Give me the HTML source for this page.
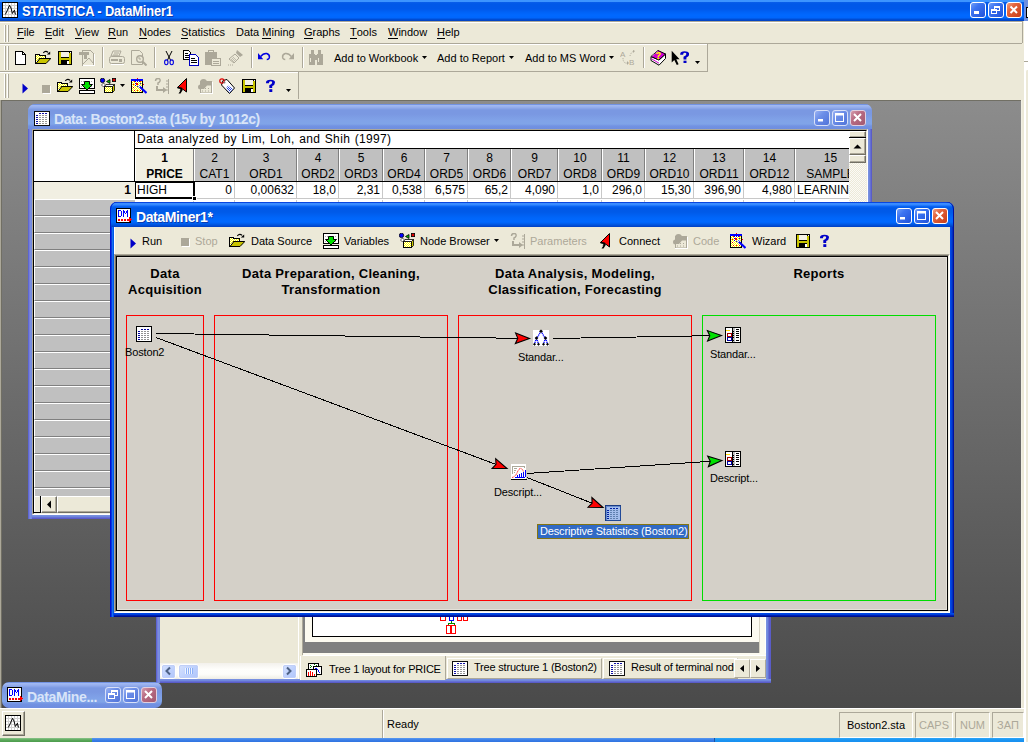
<!DOCTYPE html>
<html><head><meta charset="utf-8">
<style>
*{margin:0;padding:0;box-sizing:border-box}
html,body{width:1028px;height:742px;overflow:hidden;background:#fff;font-family:"Liberation Sans",sans-serif;font-size:11px;color:#000}
.a{position:absolute}
.tb{background:linear-gradient(#3c94ff 0,#3c94ff 2px,#0a5eea 2px,#0058e8 4px,#0058ea 9px,#0062f6 12px,#0068ff 15px,#0066fc 18px,#0050d8 19px,#0040c0 21px)}
.xt{color:#fff;font-weight:bold;font-size:13px;white-space:nowrap}
.btn{position:absolute;width:21px;height:21px;border:1px solid #fff;border-radius:3px;background:linear-gradient(135deg,#5d8ef9,#2a62e8 60%,#1d50d4)}
.cbtn{background:linear-gradient(135deg,#f08a6a,#e2532c 55%,#c83c17)}
.menu span{position:absolute;top:4px;white-space:nowrap}
.u{text-decoration:underline}
.tbar{background:#ece9d8}
.grip{position:absolute;width:3px;border-left:1px solid #fff;border-right:1px solid #aca899}
.sep{position:absolute;width:2px;border-left:1px solid #aca899;border-right:1px solid #fff}
.c{position:absolute;text-align:center;white-space:nowrap}
.hc{position:absolute;top:0;height:32px;border-left:1px solid #fff;border-right:1px solid #808080;text-align:center;font-size:12px;line-height:16px;padding-top:1px;white-space:nowrap;overflow:hidden}
.dc{position:absolute;top:33px;height:17px;background:#fff;border-right:1px solid #c8c8c8;border-bottom:1px solid #c8c8c8;text-align:right;font-size:12px;line-height:17px;padding-right:2px;white-space:nowrap;overflow:hidden}
.rh{position:absolute;left:34px;width:101px;height:17px;background:#c0c0c0;border-top:1px solid #fff;border-bottom:1px solid #808080;border-left:1px solid #fff}
.dmt{top:235px;white-space:nowrap}
.dis{color:#aca899}
.hd{top:266px;text-align:center;font-weight:bold;font-size:13px;line-height:16px;letter-spacing:0.3px}
.nl{white-space:nowrap;letter-spacing:-0.15px}
.sbb{border:1px solid #fff;outline:1px solid #c0cff8;outline-offset:-2px;border-radius:3px;background:linear-gradient(135deg,#d6e2fe,#bccffd 60%,#b0c6fb)}
.tab{background:#ece9d8;border:1px solid #fff;border-right:1px solid #aca899;border-bottom:1px solid #aca899}
.tt{white-space:nowrap;font-size:11px;letter-spacing:-0.2px}
.tbt{top:52px;white-space:nowrap}
.cb{background:#ece9d8;border:1px solid;border-color:#fff #716f64 #716f64 #fff;box-shadow:inset -1px -1px #aca899}
.sp{top:712px;height:26px;border:1px solid;border-color:#aca899 #fff #fff #aca899;text-align:center;line-height:24px;color:#aca899;white-space:nowrap}
u{text-decoration:none;border-bottom:1px solid #000;line-height:11px;display:inline-block}
.gt{font-size:12px;line-height:17px;white-space:nowrap}
</style></head><body>
<svg width="0" height="0" style="position:absolute">
<defs>
<pattern id="chk" width="2" height="2" patternUnits="userSpaceOnUse"><rect width="2" height="2" fill="#ffff00"/><rect width="1" height="1" fill="#fff"/><rect x="1" y="1" width="1" height="1" fill="#fff"/></pattern>
<pattern id="chkb" width="2" height="2" patternUnits="userSpaceOnUse"><rect width="2" height="2" fill="#fff"/><rect width="1" height="1" fill="#2040e0"/><rect x="1" y="1" width="1" height="1" fill="#2040e0"/></pattern>
<symbol id="i-play" viewBox="0 0 16 16"><path d="M6.5 5.5 L12 10.5 L6.5 15.5Z" fill="#0000c8"/></symbol>
<symbol id="i-stop" viewBox="0 0 16 16"><rect x="5" y="6" width="8" height="8" fill="#fff"/><rect x="4" y="5" width="8" height="8" fill="#aca899"/></symbol>
<symbol id="i-open" viewBox="0 0 16 16">
 <path d="M0.5 13.5 V4.5 H4 L4.8 5.5 H10.5 V8.5 H5 L1.5 13.5Z" fill="url(#chk)" stroke="#000" stroke-width="1" shape-rendering="crispEdges"/>
 <path d="M1 13.5 L4.8 8.5 H15.8 L11 13.5 Z" fill="#c8c400" stroke="#000" stroke-width="1"/>
 <path d="M8.3 2.8 Q10.5 0.2 13.2 2.4" fill="none" stroke="#000" stroke-width="1.1"/>
 <path d="M11.8 4.6 L15.2 4.6 L15.2 1.4 Z" fill="#000"/>
</symbol>
<symbol id="i-save" viewBox="0 0 16 16" shape-rendering="crispEdges">
 <rect x="1" y="1" width="14" height="14" fill="#000"/>
 <rect x="2" y="2" width="2" height="12" fill="#c8c400"/>
 <rect x="12" y="3" width="2" height="11" fill="#c8c400"/>
 <rect x="2" y="8" width="12" height="2" fill="#c8c400"/>
 <rect x="4" y="2" width="8" height="5" fill="#f4f2e8"/>
 <rect x="10" y="11" width="1.5" height="3" fill="#fff"/>
 <rect x="13" y="2" width="1" height="1" fill="#fff"/>
</symbol>
<symbol id="i-import" viewBox="0 0 16 16" shape-rendering="crispEdges">
 <rect x="0.5" y="0.5" width="15" height="10" fill="#fff" stroke="#000"/>
 <path d="M2 3.5h12M2 8.5h12" stroke="#b0b0b0" stroke-dasharray="1 1"/>
 <rect x="0.5" y="12.5" width="15" height="3" fill="#fff" stroke="#000"/>
 <path d="M5.5 3.5h5v3h3l-5.5 5.5l-5.5-5.5h3z" fill="#00e000" stroke="#000" stroke-width="1" shape-rendering="auto"/>
</symbol>
<symbol id="i-nodes" viewBox="0 0 16 16">
 <circle cx="2.5" cy="2.4" r="2.2" fill="#0000ff" stroke="#000" stroke-width="0.8"/>
 <path d="M10 1.5 L6.5 3.5 L10 5.5Z" fill="#00c000" stroke="#000" stroke-width="0.8"/>
 <rect x="12.4" y="0.4" width="3.2" height="3.2" fill="#e00000" stroke="#000" stroke-width="0.8"/>
 <path d="M3.5 5 L5.5 7 L3.5 9 L1.5 7Z" fill="#fff" stroke="#000" stroke-width="0.6"/>
 <rect x="4.5" y="8.5" width="8" height="6" fill="url(#chk)" stroke="#000" shape-rendering="crispEdges"/>
 <path d="M12.5 8.5 L14.5 6.5 V12.5 L12.5 14.5Z" fill="#c8c400" stroke="#000" stroke-width="0.8"/>
 <path d="M4.5 8.5 L6 6.5 H14.5 L12.5 8.5Z" fill="#fff" stroke="#000" stroke-width="0.8"/>
</symbol>
<symbol id="i-wizard" viewBox="0 0 16 16" shape-rendering="crispEdges">
 <rect x="0.5" y="1.5" width="11" height="13" fill="url(#chk)" stroke="#000"/>
 <rect x="0" y="1" width="12" height="2" fill="#0000ff"/>
 <path d="M6 0h1M3 3h1M9 3h1M2 6h1M12 6h1M2 9h1M6 12h1M3 12h1M9 12h1" stroke="#f00"/>
 <path d="M4 3.5h1M8 3.5h1M3.5 5.5h1M8.5 5.5h1M4 7.5h1M8 7.5h1M6 2.5v1M6 8v1" stroke="#0000e0"/>
 <rect x="5" y="5" width="2" height="2" fill="#f00"/>
 <path d="M8 8 L15.5 15" stroke="#0000ff" stroke-width="2.2" shape-rendering="auto"/>
 <path d="M7.5 7.5 L9 9" stroke="#fff" stroke-width="1.2" shape-rendering="auto"/>
</symbol>
<symbol id="i-param" viewBox="0 0 16 16">
 <path d="M1.5 3 Q1.5 0.5 4 0.5 Q6.5 0.5 6 3 Q5.5 4.5 4 5 V7" fill="none" stroke="#aca899" stroke-width="1.5"/>
 <path d="M4 8 V11 H9 V9 L13 12 L9 15 V13 H2 V8z" fill="#aca899"/>
 <path d="M14.5 1v15" stroke="#aca899"/>
 <path d="M12 3h2M12 6h2M12 9h2M12 12h2" stroke="#aca899"/>
</symbol>
<symbol id="i-connect" viewBox="0 0 16 16">
 <path d="M11.5 0.5 L2.5 9.5 L7 10.5 L11.5 14 Z" fill="#f00" stroke="#000" stroke-width="1"/>
 <path d="M2.5 9.5 L7 10.5" stroke="#000" stroke-width="1.6"/>
 <path d="M6 10.5 L4.5 12.5 L5.5 12.5 L3.5 15.5 L5.5 15.5 L8 11.5Z" fill="#000"/>
</symbol>
<symbol id="i-code" viewBox="0 0 16 16">
 <circle cx="6.5" cy="4.5" r="3.5" fill="#aca899"/>
 <circle cx="3.5" cy="9" r="2.5" fill="#aca899"/>
 <rect x="3" y="3" width="12" height="12.5" fill="#aca899"/>
 <path d="M4 14.5 V11 H7 L10 7.5 H14 V14.5 Z" fill="#ece9d8"/>
 <path d="M5 13h1M8 13h1M11 13h1M8 10.5h1M11 10.5h1" stroke="#aca899"/>
 <path d="M15.5 4v12M3 15.5h13" stroke="#fff"/>
</symbol>
<symbol id="i-tag" viewBox="0 0 16 16">
 <path d="M4 2.5 L8 1.5 L15.5 10 L10.5 15.5 L2.5 7 Z" fill="#fff" stroke="#000" stroke-width="1"/>
 <path d="M9 7.5 L14 11 L10.5 14.5 L7 10.5Z" fill="url(#chkb)"/>
 <circle cx="3" cy="3" r="2.2" fill="none" stroke="#e00000" stroke-width="1.2"/>
 <circle cx="5.5" cy="4.5" r="1" fill="#808080"/>
</symbol>
<symbol id="i-help" viewBox="0 0 16 16">
 <path d="M4 5.5 Q4 2.7 8.5 2.7 Q13 2.7 13 5.5 Q13 7.8 10.2 9 V11 H7.3 V8.2 Q10.2 7.2 10.2 5.6 Q10.2 4.3 8.5 4.3 Q6.9 4.3 6.9 6.2 H4 Z" fill="#0000c8"/>
 <rect x="7.3" y="12.2" width="3" height="2.8" fill="#0000c8"/>
</symbol>
<symbol id="i-drop" viewBox="0 0 6 4"><path d="M0 0h5l-2.5 3z" fill="#000"/></symbol>
<symbol id="i-sheet" viewBox="0 0 16 16" shape-rendering="crispEdges">
 <rect x="0.5" y="0.5" width="15" height="15" fill="#fff" stroke="#000"/>
 <path d="M5 3h2M8 3h2M11 3h2M2 5h2M2 7h2M2 9h2M2 11h2M2 13h2" stroke="#0000a0"/>
 <path d="M5 5h2M8 5h2M11 5h2M5 7h2M8 7h2M11 7h2M5 9h2M8 9h2M11 9h2M5 11h2M8 11h2M11 11h2M5 13h2M8 13h2M11 13h2" stroke="#909090"/>
</symbol>
<symbol id="i-stat" viewBox="0 0 16 16" shape-rendering="crispEdges">
 <rect x="0" y="0" width="16" height="16" fill="#000"/>
 <rect x="1" y="1" width="14" height="14" fill="#fff"/>
 <path d="M3.5 1v14M6.5 1v14M9.5 1v14M12.5 1v14M1 3.5h14M1 6.5h14M1 9.5h14M1 12.5h14" stroke="#d0d0d0"/>
 <path d="M3.3 12.5 L5.5 8 L7.5 3.3 L9 6 L10.4 11.5 L12.4 8.2 L13.5 12.5" fill="none" stroke="#000" stroke-width="1" shape-rendering="auto"/>
</symbol>
</defs></svg>
<svg width="0" height="0" style="position:absolute"><defs>
<symbol id="i-new" viewBox="0 0 16 16" shape-rendering="crispEdges">
 <path d="M2.5 1.5h7l3 3v10h-10z" fill="#fff" stroke="#000"/>
 <path d="M9.5 1.5v3h3" fill="none" stroke="#000"/>
</symbol>
<symbol id="i-pdfd" viewBox="0 0 16 16" shape-rendering="crispEdges">
 <path d="M3.5 0.5h8l3 3v12h-11z" fill="#ece9d8" stroke="#aca899"/>
 <rect x="0" y="2" width="10" height="3" fill="#aca899"/>
 <rect x="5" y="5" width="3" height="4" fill="#aca899"/>
 <path d="M4 14 L10 8 L14 13" fill="none" stroke="#aca899" shape-rendering="auto"/>
 <path d="M4 15h11M15 4v12" stroke="#fff"/>
</symbol>
<symbol id="i-printd" viewBox="0 0 16 16">
 <path d="M4 1h8l-2 5H2z" fill="#ece9d8" stroke="#aca899"/>
 <path d="M5 3h5M4 5h5" stroke="#aca899"/>
 <rect x="0.5" y="6.5" width="15" height="7" rx="2" fill="#ece9d8" stroke="#aca899"/>
 <rect x="2" y="9" width="7" height="2" fill="#aca899"/>
 <rect x="10" y="9" width="3" height="3" fill="#aca899"/>
 <path d="M2 14.5h13" stroke="#fff"/>
</symbol>
<symbol id="i-prevd" viewBox="0 0 16 16">
 <path d="M0.5 0.5h8l3 3v11h-11z" fill="#ece9d8" stroke="#aca899"/>
 <circle cx="9" cy="9" r="3.3" fill="#ece9d8" stroke="#aca899" stroke-width="1.4"/>
 <path d="M11.5 11.5l4 4" stroke="#aca899" stroke-width="2"/>
 <path d="M8 7v2h2" stroke="#aca899" fill="none"/>
</symbol>
<symbol id="i-cut" viewBox="0 0 10 16">
 <path d="M2 1 L6.5 10 M8 1 L3.5 10" stroke="#000" stroke-width="1"/>
 <ellipse cx="2.3" cy="12.3" rx="1.7" ry="2.4" fill="none" stroke="#0000e0" stroke-width="1.1"/>
 <ellipse cx="7.7" cy="12.3" rx="1.7" ry="2.4" fill="none" stroke="#0000e0" stroke-width="1.1"/>
</symbol>
<symbol id="i-copy" viewBox="0 0 16 16" shape-rendering="crispEdges">
 <path d="M0.5 0.5h5l2 2v7h-7z" fill="#fff" stroke="#000"/>
 <path d="M2 3h3M2 5h4M2 7h4" stroke="#000"/>
 <path d="M6.5 4.5h6l3 3v8h-9z" fill="#fff" stroke="#0000c0"/>
 <path d="M8 8h4M8 10h6M8 12h6" stroke="#000"/>
</symbol>
<symbol id="i-pasted" viewBox="0 0 16 16" shape-rendering="crispEdges">
 <rect x="0" y="2" width="12" height="13" rx="1" fill="#aca899"/>
 <rect x="3" y="0" width="6" height="3" fill="#aca899"/>
 <rect x="4" y="1" width="4" height="1" fill="#ece9d8"/>
 <rect x="6.5" y="8.5" width="9" height="7" fill="#ece9d8" stroke="#aca899"/>
 <path d="M8 11h6M8 13h6" stroke="#aca899"/>
</symbol>
<symbol id="i-brushd" viewBox="0 0 16 16">
 <path d="M10 0 L16 5 L13 7 L9 3Z" fill="#aca899"/>
 <path d="M8 4 L12 8 L7 13 L2 9Z" fill="#ece9d8" stroke="#aca899"/>
 <path d="M4 9l4 4M5 8l4 4M6 7l4 4" stroke="#aca899" stroke-width="0.7"/>
 <path d="M1 15h1M3 15h1M5 15h1" stroke="#aca899"/>
</symbol>
<symbol id="i-undo" viewBox="0 0 16 10">
 <path d="M3 5 Q6 1 10 1.5 Q13.5 2.5 13 6 Q12.5 8.5 10 8.5" fill="none" stroke="#0000e0" stroke-width="1.7"/>
 <path d="M0 1 L0 8 L6 8Z" fill="#0000e0"/>
</symbol>
<symbol id="i-redod" viewBox="0 0 16 10">
 <path d="M13 5 Q10 1 6 1.5 Q2.5 2.5 3 6 Q3.5 8.5 6 8.5" fill="none" stroke="#aca899" stroke-width="1.7"/>
 <path d="M16 1 L16 8 L10 8Z" fill="#aca899"/>
</symbol>
<symbol id="i-binod" viewBox="0 0 16 16" shape-rendering="crispEdges">
 <rect x="3" y="0" width="3" height="4" fill="#aca899"/>
 <rect x="10" y="0" width="3" height="4" fill="#aca899"/>
 <rect x="1" y="4" width="6" height="11" fill="#aca899"/>
 <rect x="9" y="4" width="6" height="11" fill="#aca899"/>
 <rect x="6" y="5" width="4" height="5" fill="#aca899"/>
 <rect x="2" y="8" width="1" height="4" fill="#ece9d8"/>
 <rect x="10" y="8" width="1" height="4" fill="#ece9d8"/>
</symbol>
<symbol id="i-abd" viewBox="0 0 16 16">
 <text x="0" y="7" font-family="Liberation Sans" font-size="8" fill="#aca899">A</text>
 <text x="9" y="15" font-family="Liberation Sans" font-size="8" fill="#aca899">B</text>
 <path d="M3 8 Q3 14 8 13" fill="none" stroke="#aca899" stroke-dasharray="1 1"/>
 <path d="M10 6 Q11 2 14 1" fill="none" stroke="#aca899" stroke-dasharray="1 1"/>
 <path d="M7 11l2 2l-2 2z M13 0l2 1l-2 2z" fill="#aca899"/>
</symbol>
<symbol id="i-book" viewBox="0 0 16 16">
 <path d="M1 6.5 V10.5 L9 15.2 L15.5 8.5 V4 L9 10Z" fill="#fff" stroke="#000" stroke-width="1"/>
 <path d="M1.3 8.7 L9 13.2" stroke="#d000d0" stroke-width="1"/>
 <path d="M1 6.5 L8 0.5 L15.5 4 L9 10 Z" fill="#d000d0" stroke="#000" stroke-width="1"/>
 <path d="M1.8 6.2 L7.8 1.2" stroke="#fff" stroke-width="0.8" stroke-dasharray="1 0.8"/>
 <path d="M6.5 4 Q7.5 2.3 9.5 2.8 Q11 3.6 9.5 5 L8.3 6 V7" fill="none" stroke="#ffff00" stroke-width="1.4"/>
 <rect x="7.3" y="7.6" width="1.8" height="1.6" fill="#ffff00"/>
</symbol>
<symbol id="i-whatd" viewBox="0 0 18 16">
 <path d="M0.7 0.8 V12.5 L3.3 10 L5.8 15 L7.6 14.2 L5.3 9.3 H8.6 Z" fill="#000"/>
 <g transform="translate(5.2 -1.5)"><path d="M4 5.5 Q4 2.7 8.5 2.7 Q13 2.7 13 5.5 Q13 7.8 10.2 9 V11 H7.3 V8.2 Q10.2 7.2 10.2 5.6 Q10.2 4.3 8.5 4.3 Q6.9 4.3 6.9 6.2 H4 Z" fill="#0000c8"/>
 <rect x="7.3" y="12.2" width="3" height="2.3" fill="#0000c8"/></g>
</symbol>
</defs></svg>
<svg width="0" height="0" style="position:absolute"><defs>
<symbol id="i-report" viewBox="0 0 16 16" shape-rendering="crispEdges">
 <rect x="0" y="0" width="16" height="16" fill="#000"/>
 <rect x="1" y="1" width="6" height="14" fill="#fff"/>
 <rect x="8" y="1" width="7" height="14" fill="#fff"/>
 <rect x="8" y="1" width="2" height="14" fill="#c0c0c0"/>
 <rect x="1" y="3" width="4" height="1" fill="#ffd800"/>
 <rect x="2" y="6" width="4" height="3" fill="none" stroke="#a00000"/>
 <rect x="2" y="10" width="4" height="3" fill="none" stroke="#0000a0"/>
 <path d="M11 2h3M11 4h3M11 6h3M11 8h3M11 10h3M11 13h3M8 4h1M8 6h1M8 8h1M8 10h1M8 13h1" stroke="#000"/>
</symbol>
</defs></svg>
<svg width="0" height="0" style="position:absolute"><defs>
<symbol id="i-dm" viewBox="0 0 16 16" shape-rendering="crispEdges">
 <rect x="0" y="0" width="15" height="15" fill="#000"/>
 <rect x="1" y="1" width="13" height="13" fill="#fff"/>
 <path d="M2.5 2.5v6h2l1-1v-4l-1-1z M7.5 8.5v-6l2 3l2-3v6" fill="none" stroke="#0000ff"/>
 <path d="M2 11h2M5 11h2M8 11h2M11 11h2M2 12h2M5 12h2M8 12h2M11 12h2" stroke="#f00"/>
 <path d="M13 9l3 2.5l-3 2.5z" fill="#f00"/>
</symbol>
</defs></svg>

<svg width="0" height="0" style="position:absolute"><defs>
<linearGradient id="gba" x1="0" y1="0" x2="1" y2="1"><stop offset="0" stop-color="#76a3f9"/><stop offset="0.35" stop-color="#3c74f1"/><stop offset="1" stop-color="#1e4fd8"/></linearGradient>
<linearGradient id="gbc" x1="0" y1="0" x2="1" y2="1"><stop offset="0" stop-color="#f2a58a"/><stop offset="0.35" stop-color="#e3643c"/><stop offset="1" stop-color="#c53a15"/></linearGradient>
<linearGradient id="gbi" x1="0" y1="0" x2="1" y2="1"><stop offset="0" stop-color="#9eb6f4"/><stop offset="0.4" stop-color="#6c8ee8"/><stop offset="1" stop-color="#4f72d8"/></linearGradient>
<linearGradient id="gbic" x1="0" y1="0" x2="1" y2="1"><stop offset="0" stop-color="#d8a0b0"/><stop offset="0.4" stop-color="#b86b82"/><stop offset="1" stop-color="#a05870"/></linearGradient>
</defs></svg>
<!-- MDI background -->
<div class="a" style="left:0;top:99px;width:1022px;height:610px;background:linear-gradient(#8c8c8c,#4a4a4a);border-style:solid;border-width:1px;border-color:#aca899 #f1efe2 #fff #aca899;box-shadow:inset 1px 1px #716f64"></div>
<div class="a" style="left:1022px;top:21px;width:2px;height:717px;background:#ece9d8"></div>
<!-- right strip another window -->
<div class="a" style="left:1024px;top:0;width:4px;height:742px;background:#fff"></div>
<div class="a" style="left:1024px;top:0;width:4px;height:21px;background:#6d8fe0"></div>
<div class="a" style="left:1026px;top:7px;width:2px;height:11px;background:#fff;border-left:1px solid #000;border-top:1px solid #000;border-bottom:1px solid #000"></div>
<div class="a" style="left:1024px;top:61px;width:4px;height:1px;background:#aca899"></div>
<div class="a" style="left:1025px;top:70px;width:3px;height:672px;background:#ece9d8;border-left:1px solid #fff;border-top-left-radius:2px"></div>

<!-- main title -->
<div class="a tb" style="left:0;top:0;width:1024px;height:21px"></div>
<div class="a xt" style="left:22px;top:3px;font-size:13px;letter-spacing:-0.15px;transform:scale(0.99,1.1);transform-origin:0 0;text-shadow:1px 1px #0a3cb0">STATISTICA - DataMiner1</div>

<svg class="a" style="left:970px;top:2px" width="16" height="16"><rect x="0.5" y="0.5" width="15" height="15" rx="2.5" fill="url(#gba)" stroke="#fff"/><rect x="4" y="9" width="5" height="3" fill="#fff"/></svg><svg class="a" style="left:988px;top:2px" width="16" height="16"><rect x="0.5" y="0.5" width="15" height="15" rx="2.5" fill="url(#gba)" stroke="#fff"/><rect x="6.5" y="4.5" width="5" height="4" fill="none" stroke="#fff"/><rect x="6" y="4" width="6" height="2" fill="#fff"/><rect x="3.5" y="7.5" width="5" height="4" fill="#2a62e8" stroke="#fff"/><rect x="3" y="7" width="6" height="2" fill="#fff"/></svg><svg class="a" style="left:1006px;top:2px" width="16" height="16"><rect x="0.5" y="0.5" width="15" height="15" rx="2.5" fill="url(#gbc)" stroke="#fff"/><path d="M4.5 4.5L11 11M11 4.5L4.5 11" stroke="#fff" stroke-width="2"/></svg>
<svg class="a" style="left:2px;top:2px" width="16" height="16"><use href="#i-stat" width="16" height="16"/></svg>
<!-- menu -->
<div class="a tbar menu" style="left:0;top:21px;width:1022px;height:22px;border-top:1px solid #aca899;box-shadow:inset 0 1px #fff">
<div class="a" style="left:4px;top:3px;width:2px;height:17px;border-left:1px solid #fff;background:#aca899"></div><div class="a" style="left:7px;top:3px;width:2px;height:17px;border-left:1px solid #fff;background:#aca899"></div>
 <span style="left:17px"><u>F</u>ile</span>
 <span style="left:45px"><u>E</u>dit</span>
 <span style="left:75px"><u>V</u>iew</span>
 <span style="left:108px"><u>R</u>un</span>
 <span style="left:139px"><u>N</u>odes</span>
 <span style="left:181px"><u>S</u>tatistics</span>
 <span style="left:236px">Data <u>M</u>ining</span>
 <span style="left:304px"><u>G</u>raphs</span>
 <span style="left:350px"><u>T</u>ools</span>
 <span style="left:388px"><u>W</u>indow</span>
 <span style="left:437px"><u>H</u>elp</span>
</div>
<div class="a" style="left:1022px;top:21px;width:1px;height:22px;background:#aca899"></div>
<!-- toolbar 1 -->
<div class="a tbar" style="left:0;top:44px;width:1022px;height:28px"></div>
<!-- toolbar 2 -->
<div class="a tbar" style="left:0;top:72px;width:1022px;height:28px"></div>



<!-- TB ICONS -->
<div class="a" style="left:0;top:43px;width:1022px;height:1px;background:#aca899"></div><div class="a" style="left:0;top:44px;width:707px;height:1px;background:#fff"></div>
<div class="a" style="left:0;top:71px;width:708px;height:1px;background:#aca899"></div><div class="a" style="left:0;top:72px;width:299px;height:1px;background:#fff"></div>
<div class="a" style="left:707px;top:44px;width:1px;height:28px;background:#aca899"></div>
<div class="a" style="left:298px;top:72px;width:1px;height:27px;background:#aca899"></div>

<div class="a" style="left:4px;top:46px;width:2px;height:24px;border-left:1px solid #fff;background:#aca899"></div><div class="a" style="left:7px;top:46px;width:2px;height:24px;border-left:1px solid #fff;background:#aca899"></div>
<div class="a" style="left:4px;top:74px;width:2px;height:24px;border-left:1px solid #fff;background:#aca899"></div><div class="a" style="left:7px;top:74px;width:2px;height:24px;border-left:1px solid #fff;background:#aca899"></div>
<svg class="a" style="left:13px;top:50px" width="16" height="16"><use href="#i-new" width="16" height="16"/></svg>
<svg class="a" style="left:35px;top:50px" width="16" height="16"><use href="#i-open" width="16" height="16"/></svg>
<svg class="a" style="left:57px;top:50px" width="16" height="16"><use href="#i-save" width="16" height="16"/></svg>
<svg class="a" style="left:79px;top:50px" width="16" height="16"><use href="#i-pdfd" width="16" height="16"/></svg>
<div class="a" style="left:102px;top:47px;width:2px;height:21px;border-left:1px solid #aca899;border-right:1px solid #fff"></div>
<svg class="a" style="left:109px;top:50px" width="16" height="16"><use href="#i-printd" width="16" height="16"/></svg>
<svg class="a" style="left:131px;top:50px" width="16" height="16"><use href="#i-prevd" width="16" height="16"/></svg>
<div class="a" style="left:154px;top:47px;width:2px;height:21px;border-left:1px solid #aca899;border-right:1px solid #fff"></div>
<svg class="a" style="left:164px;top:50px" width="10" height="16"><use href="#i-cut" width="10" height="16"/></svg>
<svg class="a" style="left:183px;top:50px" width="16" height="16"><use href="#i-copy" width="16" height="16"/></svg>
<svg class="a" style="left:205px;top:50px" width="16" height="16"><use href="#i-pasted" width="16" height="16"/></svg>
<svg class="a" style="left:227px;top:50px" width="16" height="16"><use href="#i-brushd" width="16" height="16"/></svg>
<div class="a" style="left:251px;top:47px;width:2px;height:21px;border-left:1px solid #aca899;border-right:1px solid #fff"></div>
<svg class="a" style="left:258px;top:52px" width="14" height="9"><use href="#i-undo" width="14" height="9"/></svg>
<svg class="a" style="left:280px;top:52px" width="14" height="9"><use href="#i-redod" width="14" height="9"/></svg>
<div class="a" style="left:302px;top:47px;width:2px;height:21px;border-left:1px solid #aca899;border-right:1px solid #fff"></div>
<svg class="a" style="left:308px;top:50px" width="16" height="16"><use href="#i-binod" width="16" height="16"/></svg>
<div class="a tbt" style="left:334px">Add to Workbook</div>
<svg class="a" style="left:422px;top:56px" width="6" height="4"><use href="#i-drop" width="6" height="4"/></svg>
<div class="a tbt" style="left:437px">Add to Report</div>
<svg class="a" style="left:509px;top:56px" width="6" height="4"><use href="#i-drop" width="6" height="4"/></svg>
<div class="a tbt" style="left:525px">Add to MS Word</div>
<svg class="a" style="left:609px;top:56px" width="6" height="4"><use href="#i-drop" width="6" height="4"/></svg>
<svg class="a" style="left:620px;top:50px" width="16" height="16"><use href="#i-abd" width="16" height="16"/></svg>
<div class="a" style="left:643px;top:47px;width:2px;height:21px;border-left:1px solid #aca899;border-right:1px solid #fff"></div>
<svg class="a" style="left:650px;top:50px" width="16" height="16"><use href="#i-book" width="16" height="16"/></svg>
<svg class="a" style="left:671px;top:50px" width="18" height="16"><use href="#i-whatd" width="18" height="16"/></svg>
<svg class="a" style="left:695px;top:61px" width="6" height="4"><use href="#i-drop" width="6" height="4"/></svg>
<svg class="a" style="left:16px;top:78px" width="16" height="16"><use href="#i-play" width="16" height="16"/></svg>
<svg class="a" style="left:38px;top:80px" width="16" height="16"><use href="#i-stop" width="16" height="16"/></svg>
<svg class="a" style="left:57px;top:78px" width="16" height="16"><use href="#i-open" width="16" height="16"/></svg>
<svg class="a" style="left:79px;top:78px" width="16" height="16"><use href="#i-import" width="16" height="16"/></svg>
<svg class="a" style="left:100px;top:78px" width="16" height="16"><use href="#i-nodes" width="16" height="16"/></svg>
<svg class="a" style="left:120px;top:84px" width="6" height="4"><use href="#i-drop" width="6" height="4"/></svg>
<svg class="a" style="left:131px;top:78px" width="16" height="16"><use href="#i-wizard" width="16" height="16"/></svg>
<svg class="a" style="left:154px;top:78px" width="16" height="16"><use href="#i-param" width="16" height="16"/></svg>
<svg class="a" style="left:175px;top:78px" width="16" height="16"><use href="#i-connect" width="16" height="16"/></svg>
<svg class="a" style="left:197px;top:78px" width="16" height="16"><use href="#i-code" width="16" height="16"/></svg>
<svg class="a" style="left:219px;top:78px" width="16" height="16"><use href="#i-tag" width="16" height="16"/></svg>
<svg class="a" style="left:241px;top:78px" width="16" height="16"><use href="#i-save" width="16" height="16"/></svg>
<svg class="a" style="left:262px;top:77px" width="16" height="16"><use href="#i-help" width="16" height="16"/></svg>
<svg class="a" style="left:286px;top:89px" width="6" height="4"><use href="#i-drop" width="6" height="4"/></svg>
<!-- ===== TREE WINDOW (behind) ===== -->
<div class="a" style="left:156px;top:500px;width:615px;height:183px;background:#7b96df"></div>
<div class="a" style="left:156px;top:500px;width:4px;height:183px;background:linear-gradient(90deg,#5c66d2 0,#5c66d2 1px,#767ddb 1px,#767ddb 2px,#7a8ee0 2px,#7a8ee0 3px,#7389df 3px)"></div>
<div class="a" style="left:766px;top:500px;width:5px;height:183px;background:linear-gradient(90deg,#7890e0 0,#7890e0 1px,#7088dc 1px,#7088dc 2px,#6470d4 2px,#6470d4 3px,#5a5cc8 3px)"></div>
<div class="a" style="left:156px;top:679px;width:615px;height:4px;background:linear-gradient(#7890e0 0,#7890e0 1px,#7088dc 1px,#7088dc 2px,#6470d4 2px,#6470d4 3px,#5a5cc8 3px)"></div>
<div class="a" style="left:156px;top:679px;width:4px;height:4px;background:linear-gradient(90deg,#5c66d2 0,#5c66d2 1px,#767ddb 1px,#767ddb 2px,#7a8ee0 2px,#7a8ee0 3px,#7389df 3px)"></div>
<div class="a" style="left:160px;top:500px;width:606px;height:179px;background:#ece9d8"></div>
<!-- left pane scrollbar -->
<div class="a" style="left:160px;top:663px;width:138px;height:16px;background:linear-gradient(#f3f1ec,#fefefb 40%,#fdfdfa 70%,#eeede5)"></div>
<div class="a sbb" style="left:161px;top:664px;width:15px;height:15px"></div>
<div class="a sbb" style="left:178px;top:664px;width:21px;height:15px"></div>
<div class="a sbb" style="left:282px;top:664px;width:15px;height:15px"></div>
<svg class="a" style="left:160px;top:663px" width="138" height="16">
<path d="M10 4.5L6.5 8L10 11.5" fill="none" stroke="#4d6185" stroke-width="2"/>
<path d="M127 4.5L130.5 8L127 11.5" fill="none" stroke="#4d6185" stroke-width="2"/>
<path d="M25.5 5v6M27.5 5v6M29.5 5v6M31.5 5v6" stroke="#eef4fe"/>
<path d="M26.5 5v6M28.5 5v6M30.5 5v6M32.5 5v6" stroke="#8cb0f8"/>
</svg>
<div class="a" style="left:298px;top:500px;width:4px;height:179px;background:#ece9d8;border-left:1px solid #fff"></div>
<!-- right pane -->
<div class="a" style="left:302px;top:500px;width:464px;height:155px;background:#fcfaf0;border-left:1px solid #aca899;border-right:1px solid #fff"></div>
<div class="a" style="left:303px;top:500px;width:2px;height:153px;background:#808080"></div>
<div class="a" style="left:303px;top:642px;width:456px;height:11px;background:#808080"></div>
<div class="a" style="left:312px;top:500px;width:440px;height:137px;background:#fff;border:1px solid #000;border-top:none"></div>
<div class="a" style="left:759px;top:500px;width:1px;height:155px;background:#d8d4c4"></div>
<!-- tiny tree -->
<svg class="a" style="left:438px;top:612px" width="32" height="24" viewBox="438 612 32 24">
<g fill="none" stroke-width="1" shape-rendering="crispEdges">
<rect x="440.5" y="612.5" width="5" height="8" stroke="#f00"/>
<rect x="449.5" y="612.5" width="4" height="8" stroke="#00f"/>
<rect x="457.5" y="612.5" width="4" height="8" stroke="#f00"/>
<rect x="463.5" y="612.5" width="4" height="8" stroke="#f00"/>
<path d="M451.5 621v2.5M448.5 625v-2h6v2" stroke="#080"/>
<rect x="446.5" y="625.5" width="4" height="8" stroke="#f00"/>
<rect x="451.5" y="625.5" width="4" height="8" stroke="#f00"/>
<path d="M450.5 625v9" stroke="#f00"/>
</g></svg>
<!-- tabs -->
<div class="a" style="left:303px;top:653px;width:463px;height:2px;background:#fcfaf0"></div>
<div class="a tab" style="left:447px;top:658px;width:155px;height:21px"></div>
<div class="a tab" style="left:603px;top:658px;width:135px;height:21px"></div>
<div class="a tab" style="left:300px;top:656px;width:146px;height:24px;border-bottom:none;border-top:none"></div>
<div class="a" style="left:303px;top:655px;width:463px;height:1px;background:#fff"></div>
<div class="a tt" style="left:329px;top:663px">Tree 1 layout for PRICE</div>
<div class="a tt" style="left:474px;top:661px">Tree structure 1 (Boston2)</div>
<div class="a tt" style="left:631px;top:661px;width:106px;overflow:hidden">Result of terminal nodes</div>
<div class="a tab" style="left:734px;top:659px;width:16px;height:19px"></div>
<div class="a tab" style="left:750px;top:659px;width:16px;height:19px"></div>

<svg class="a" style="left:306px;top:663px" width="16" height="14" shape-rendering="crispEdges">
<rect x="2.5" y="0.5" width="10" height="6" fill="#fff" stroke="#000"/>
<path d="M4 2h1M5 3h1M4 4h1M8 1h1M10 2h1" stroke="#008000"/>
<rect x="7.5" y="3.5" width="8" height="8" fill="#fff" stroke="#000"/>
<path d="M9 5h2M11 6v1M12 7v2M13 9h1" stroke="#0000ff"/>
<rect x="0.5" y="6.5" width="10" height="7" fill="#fff" stroke="#000"/>
<path d="M2 9v4M4 8v5M6 9v4M8 11v2" stroke="#f00"/>
</svg>
<svg class="a" style="left:452px;top:661px" width="16" height="15"><use href="#i-sheet" width="16" height="15"/></svg>
<svg class="a" style="left:609px;top:661px" width="16" height="15"><use href="#i-sheet" width="16" height="15"/></svg>
<svg class="a" style="left:734px;top:659px" width="32" height="19"><path d="M10 6v7l-4-3.5z M22 6v7l4-3.5z" fill="#000"/></svg>

<!-- ===== MINIMIZED WINDOW ===== -->
<div class="a" style="left:2px;top:682px;width:160px;height:26px;border-radius:7px;background:linear-gradient(#7393e3 0,#7393e3 1px,#a3bbf2 1px,#98b0ee 3px,#7a98e2 6px,#7a98e2 10px,#80a2e8 16px,#80a4e8 20px,#7292e2 22px,#6f8ee0 25px)"></div>
<div class="a xt" style="left:27px;top:689px;font-size:14px;letter-spacing:-0.35px;color:#d8e4f8">DataMine...</div>
<svg class="a" style="left:105px;top:687px" width="16" height="16"><rect x="0.5" y="0.5" width="15" height="15" rx="2.5" fill="url(#gbi)" stroke="#d8e0f8"/><rect x="6.5" y="3.5" width="6" height="5" fill="none" stroke="#fff"/><rect x="6" y="3" width="7" height="2" fill="#fff"/><rect x="3.5" y="6.5" width="6" height="5" fill="url(#gbi)" stroke="#fff"/><rect x="3" y="6" width="7" height="2" fill="#fff"/></svg><svg class="a" style="left:123px;top:687px" width="16" height="16"><rect x="0.5" y="0.5" width="15" height="15" rx="2.5" fill="url(#gbi)" stroke="#d8e0f8"/><rect x="3.5" y="3.5" width="8" height="8" fill="none" stroke="#fff"/><rect x="3" y="3" width="9" height="2.5" fill="#fff"/></svg><svg class="a" style="left:141px;top:687px" width="16" height="16"><rect x="0.5" y="0.5" width="15" height="15" rx="2.5" fill="url(#gbic)" stroke="#e0d0e0"/><path d="M4 4L11 11M11 4L4 11" stroke="#fff" stroke-width="2"/></svg>
<svg class="a" style="left:7px;top:687px" width="16" height="16"><use href="#i-dm" width="16" height="16"/></svg>

<!-- ===== DATA WINDOW ===== -->
<div class="a" style="left:28px;top:104px;width:844px;height:415px;background:#7b96df;border-radius:7px 7px 0 0"></div>
<div class="a" style="left:28px;top:104px;width:844px;height:25px;border-radius:7px 7px 0 0;background:linear-gradient(#7393e3 0,#7393e3 1px,#a3bbf2 1px,#98b0ee 3px,#7a98e2 6px,#7a98e2 10px,#80a2e8 16px,#80a4e8 20px,#7292e2 22px,#6f8ee0 25px)"></div>
<div class="a" style="left:28px;top:129px;width:4px;height:390px;background:linear-gradient(90deg,#5c66d2 0,#5c66d2 1px,#767ddb 1px,#767ddb 2px,#7a8ee0 2px,#7a8ee0 3px,#7389df 3px)"></div>
<div class="a" style="left:868px;top:129px;width:4px;height:390px;background:linear-gradient(90deg,#7890e0 0,#7890e0 1px,#7088dc 1px,#7088dc 2px,#6470d4 2px,#6470d4 3px,#5a5cc8 3px)"></div>
<div class="a" style="left:28px;top:515px;width:844px;height:4px;background:linear-gradient(#7890e0 0,#7890e0 1px,#7088dc 1px,#7088dc 2px,#6470d4 2px,#6470d4 3px,#5a5cc8 3px)"></div>
<div class="a" style="left:28px;top:515px;width:4px;height:4px;background:linear-gradient(90deg,#5c66d2 0,#5c66d2 1px,#767ddb 1px,#767ddb 2px,#7a8ee0 2px,#7a8ee0 3px,#7389df 3px)"></div>
<div class="a xt" style="left:54px;top:111px;font-size:14px;letter-spacing:-0.4px;color:#d8e4f8">Data: Boston2.sta (15v by 1012c)</div>
<svg class="a" style="left:814px;top:110px" width="16" height="16"><rect x="0.5" y="0.5" width="15" height="15" rx="2.5" fill="url(#gbi)" stroke="#d8e0f8"/><rect x="4" y="9" width="5" height="2.5" fill="#fff"/></svg><svg class="a" style="left:832px;top:110px" width="16" height="16"><rect x="0.5" y="0.5" width="15" height="15" rx="2.5" fill="url(#gbi)" stroke="#d8e0f8"/><rect x="3.5" y="3.5" width="8" height="8" fill="none" stroke="#fff"/><rect x="3" y="3" width="9" height="2.5" fill="#fff"/></svg><svg class="a" style="left:850px;top:110px" width="16" height="16"><rect x="0.5" y="0.5" width="15" height="15" rx="2.5" fill="url(#gbic)" stroke="#e0d0e0"/><path d="M4 4L11 11M11 4L4 11" stroke="#fff" stroke-width="2"/></svg>
<svg class="a" style="left:34px;top:111px" width="16" height="15"><use href="#i-sheet" width="16" height="15"/></svg>
<div class="a" style="left:32px;top:129px;width:836px;height:386px;background:#fff;border-style:solid;border-width:1px;border-color:#aca899 #fff #fff #aca899"></div>
<div class="a" style="left:33px;top:130px;width:834px;height:384px;background:#fff;border-style:solid;border-width:1px;border-color:#000 #f1efe2 #f1efe2 #000"></div>
<div class="a" style="left:34px;top:131px;width:101px;height:50px;background:#fff;border-right:1px solid #000"></div>
<div class="a gt" style="left:136px;top:131px;width:713px;height:17px;padding-left:1px;letter-spacing:0.35px;word-spacing:0.8px">Data analyzed by Lim, Loh, and Shih (1997)</div>
<div class="a" style="left:135px;top:148px;width:714px;height:1px;background:#000"></div>
<div class="a" style="left:34px;top:181px;width:815px;height:1px;background:#000"></div>
<div class="a" style="left:135px;top:149px;width:714px;height:54px;overflow:hidden"><div class="hc" style="left:0px;width:59px;background:#f1efe2;font-weight:bold;">1<br>PRICE</div><div class="dc" style="left:0px;width:59px;text-align:left;padding-left:2px;">HIGH</div><div class="dc" style="left:0px;top:51px;width:59px"></div><div class="hc" style="left:59px;width:41px;background:#c0c0c0;">2<br>CAT1</div><div class="dc" style="left:59px;width:41px;">0</div><div class="dc" style="left:59px;top:51px;width:41px"></div><div class="hc" style="left:100px;width:62px;background:#c0c0c0;">3<br>ORD1</div><div class="dc" style="left:100px;width:62px;">0,00632</div><div class="dc" style="left:100px;top:51px;width:62px"></div><div class="hc" style="left:162px;width:42px;background:#c0c0c0;">4<br>ORD2</div><div class="dc" style="left:162px;width:42px;">18,0</div><div class="dc" style="left:162px;top:51px;width:42px"></div><div class="hc" style="left:204px;width:44px;background:#c0c0c0;">5<br>ORD3</div><div class="dc" style="left:204px;width:44px;">2,31</div><div class="dc" style="left:204px;top:51px;width:44px"></div><div class="hc" style="left:248px;width:42px;background:#c0c0c0;">6<br>ORD4</div><div class="dc" style="left:248px;width:42px;">0,538</div><div class="dc" style="left:248px;top:51px;width:42px"></div><div class="hc" style="left:290px;width:43px;background:#c0c0c0;">7<br>ORD5</div><div class="dc" style="left:290px;width:43px;">6,575</div><div class="dc" style="left:290px;top:51px;width:43px"></div><div class="hc" style="left:333px;width:43px;background:#c0c0c0;">8<br>ORD6</div><div class="dc" style="left:333px;width:43px;">65,2</div><div class="dc" style="left:333px;top:51px;width:43px"></div><div class="hc" style="left:376px;width:47px;background:#c0c0c0;">9<br>ORD7</div><div class="dc" style="left:376px;width:47px;">4,090</div><div class="dc" style="left:376px;top:51px;width:47px"></div><div class="hc" style="left:423px;width:44px;background:#c0c0c0;">10<br>ORD8</div><div class="dc" style="left:423px;width:44px;">1,0</div><div class="dc" style="left:423px;top:51px;width:44px"></div><div class="hc" style="left:467px;width:43px;background:#c0c0c0;">11<br>ORD9</div><div class="dc" style="left:467px;width:43px;">296,0</div><div class="dc" style="left:467px;top:51px;width:43px"></div><div class="hc" style="left:510px;width:49px;background:#c0c0c0;">12<br>ORD10</div><div class="dc" style="left:510px;width:49px;">15,30</div><div class="dc" style="left:510px;top:51px;width:49px"></div><div class="hc" style="left:559px;width:50px;background:#c0c0c0;">13<br>ORD11</div><div class="dc" style="left:559px;width:50px;">396,90</div><div class="dc" style="left:559px;top:51px;width:50px"></div><div class="hc" style="left:609px;width:51px;background:#c0c0c0;">14<br>ORD12</div><div class="dc" style="left:609px;width:51px;">4,980</div><div class="dc" style="left:609px;top:51px;width:51px"></div><div class="hc" style="left:660px;width:71px;background:#c0c0c0;">15<br>SAMPLE</div><div class="dc" style="left:660px;width:71px;text-align:left;padding-left:2px;">LEARNING</div><div class="dc" style="left:660px;top:51px;width:71px"></div></div>
<div class="a" style="left:135px;top:182px;width:60px;height:17px;border:1px solid #000;border-right-width:2px;border-bottom-width:2px"></div>
<div class="a" style="left:192px;top:196px;width:5px;height:5px;background:#000;border:1px solid #fff"></div>
<div class="a gt" style="left:34px;top:182px;width:101px;height:17px;background:#f1efe2;text-align:right;font-weight:bold;padding-right:4px">1</div>
<div class="rh" style="top:199px"></div>
<div class="rh" style="top:216px"></div>
<div class="rh" style="top:233px"></div>
<div class="rh" style="top:250px"></div>
<div class="rh" style="top:267px"></div>
<div class="rh" style="top:284px"></div>
<div class="rh" style="top:301px"></div>
<div class="rh" style="top:318px"></div>
<div class="rh" style="top:335px"></div>
<div class="rh" style="top:352px"></div>
<div class="rh" style="top:369px"></div>
<div class="rh" style="top:386px"></div>
<div class="rh" style="top:403px"></div>
<div class="rh" style="top:420px"></div>
<div class="rh" style="top:437px"></div>
<div class="rh" style="top:454px"></div>
<div class="rh" style="top:471px"></div>
<div class="rh" style="top:488px"></div>
<!-- data win scrollbars -->
<div class="a" style="left:849px;top:131px;width:17px;height:381px;background:repeating-conic-gradient(#ece9d8 0 25%,#fbfaf6 0 50%) 0 0/2px 2px"></div>
<div class="a cb" style="left:849px;top:131px;width:17px;height:7px"></div>
<div class="a" style="left:849px;top:137px;width:17px;height:1px;background:#000"></div>
<div class="a cb" style="left:849px;top:138px;width:17px;height:17px"></div>
<svg class="a" style="left:849px;top:138px" width="17" height="17"><path d="M4.5 10.5h8l-4-4z" fill="#000"/></svg>
<div class="a cb" style="left:849px;top:155px;width:17px;height:8px"></div>
<div class="a" style="left:34px;top:496px;width:832px;height:17px;background:#ece9d8"></div>
<div class="a cb" style="left:34px;top:496px;width:6px;height:16px;box-shadow:none;border-color:#fff #ece9d8 #ece9d8 #fff"></div>
<div class="a" style="left:40px;top:496px;width:1px;height:17px;background:#000"></div>
<div class="a" style="left:33px;top:512px;width:8px;height:1px;background:#000"></div>
<div class="a cb" style="left:41px;top:496px;width:16px;height:17px"></div>
<svg class="a" style="left:41px;top:496px" width="16" height="17"><path d="M10 4.5v8l-4-4z" fill="#000"/></svg>
<div class="a cb" style="left:57px;top:496px;width:60px;height:17px"></div>

<!-- ===== DATAMINER WINDOW ===== -->
<div class="a" style="left:110px;top:202px;width:844px;height:415px;background:#0050e0;border-radius:7px 7px 0 0"></div>
<div class="a" style="left:110px;top:202px;width:844px;height:25px;border-radius:7px 7px 0 0;box-shadow:inset 1px 0 #0020c8,inset -1px 0 #0010a0;background:linear-gradient(#0846e0 0,#0846e0 1px,#3d8eff 1px,#3488ff 3px,#0c68f6 4px,#0058e8 6px,#005ae8 10px,#0066fa 16px,#0068ff 20px,#005ce8 22px,#0048d0 24px,#0040c0 25px)"></div>
<div class="a" style="left:110px;top:227px;width:4px;height:390px;background:linear-gradient(90deg,#0010d0 0,#0010d0 1px,#0838e0 1px,#0838e0 2px,#1670f0 2px,#1670f0 3px,#0058e8 3px)"></div>
<div class="a" style="left:950px;top:227px;width:4px;height:390px;background:linear-gradient(90deg,#0048e8 0,#0048e8 1px,#0040d8 1px,#0040d8 2px,#0030c0 2px,#0030c0 3px,#0010a0 3px)"></div>
<div class="a" style="left:110px;top:613px;width:844px;height:4px;background:linear-gradient(#0048e8 0,#0048e8 1px,#0040d8 1px,#0040d8 2px,#0020b0 2px,#0020b0 3px,#001090 3px)"></div>
<div class="a" style="left:110px;top:613px;width:4px;height:4px;background:linear-gradient(90deg,#0010d0 0,#0010d0 1px,#0838e0 1px,#0838e0 2px,#1670f0 2px,#1670f0 3px,#0048e8 3px)"></div>
<div class="a xt" style="left:136px;top:209px;font-size:14px;letter-spacing:-0.4px;text-shadow:1px 1px #0a3cb0">DataMiner1*</div>
<div class="a" style="left:114px;top:227px;width:836px;height:27px;background:#ece9d8;border-left:1px solid #fff"></div>
<div class="a" style="left:114px;top:254px;width:836px;height:359px;background:#d4d0c8;border-style:solid;border-width:1px;border-color:#aca899 #fff #fff #aca899"></div>
<div class="a" style="left:115px;top:255px;width:834px;height:357px;border-style:solid;border-width:1px;border-color:#716f64 #f1efe2 #f1efe2 #716f64"></div>
<div class="a" style="left:116px;top:256px;width:832px;height:355px;border:1px solid #000;box-shadow:inset 1px 1px #e4e0d8,inset -1px -1px #e4e0d8"></div>
<svg class="a" style="left:896px;top:208px" width="16" height="16"><rect x="0.5" y="0.5" width="15" height="15" rx="2.5" fill="url(#gba)" stroke="#fff"/><rect x="4" y="9" width="5" height="2.5" fill="#fff"/></svg><svg class="a" style="left:914px;top:208px" width="16" height="16"><rect x="0.5" y="0.5" width="15" height="15" rx="2.5" fill="url(#gba)" stroke="#fff"/><rect x="3.5" y="3.5" width="8" height="8" fill="none" stroke="#fff"/><rect x="3" y="3" width="9" height="2.5" fill="#fff"/></svg><svg class="a" style="left:932px;top:208px" width="16" height="16"><rect x="0.5" y="0.5" width="15" height="15" rx="2.5" fill="url(#gbc)" stroke="#fff"/><path d="M4 4L11 11M11 4L4 11" stroke="#fff" stroke-width="2"/></svg>
<svg class="a" style="left:116px;top:208px" width="16" height="16"><use href="#i-dm" width="16" height="16"/></svg>
<!-- toolbar text -->
<div class="a dmt" style="left:142px">Run</div>
<div class="a dmt dis" style="left:195px">Stop</div>
<div class="a dmt" style="left:251px">Data Source</div>
<div class="a dmt" style="left:344px">Variables</div>
<div class="a dmt" style="left:420px">Node Browser</div>
<div class="a dmt dis" style="left:530px">Parameters</div>
<div class="a dmt" style="left:619px">Connect</div>
<div class="a dmt dis" style="left:693px">Code</div>
<div class="a dmt" style="left:752px">Wizard</div>
<!-- canvas headers -->
<div class="a hd" style="left:115px;width:100px;">Data<br>Acquisition</div>
<div class="a hd" style="left:230px;width:202px;">Data Preparation, Cleaning,<br>Transformation</div>
<div class="a hd" style="left:474px;width:202px;">Data Analysis, Modeling,<br>Classification, Forecasting</div>
<div class="a hd" style="left:718px;width:202px;">Reports</div>
<div class="a" style="left:126px;top:315px;width:78px;height:286px;border:1px solid #ff0000"></div>
<div class="a" style="left:214px;top:315px;width:234px;height:286px;border:1px solid #ff0000"></div>
<div class="a" style="left:458px;top:315px;width:234px;height:286px;border:1px solid #ff0000"></div>
<div class="a" style="left:702px;top:315px;width:234px;height:286px;border:1px solid #00dd00"></div>
<!-- DM toolbar icons -->
<svg class="a" style="left:124px;top:233px" width="16" height="16"><use href="#i-play" width="16" height="16"/></svg>
<svg class="a" style="left:177px;top:233px" width="16" height="16"><use href="#i-stop" width="16" height="16"/></svg>
<svg class="a" style="left:229px;top:233px" width="16" height="16"><use href="#i-open" width="16" height="16"/></svg>
<svg class="a" style="left:323px;top:233px" width="16" height="16"><use href="#i-import" width="16" height="16"/></svg>
<svg class="a" style="left:399px;top:233px" width="16" height="16"><use href="#i-nodes" width="16" height="16"/></svg>
<svg class="a" style="left:494px;top:239px" width="6" height="4"><use href="#i-drop" width="6" height="4"/></svg>
<svg class="a" style="left:510px;top:233px" width="16" height="16"><use href="#i-param" width="16" height="16"/></svg>
<svg class="a" style="left:598px;top:233px" width="16" height="16"><use href="#i-connect" width="16" height="16"/></svg>
<svg class="a" style="left:672px;top:233px" width="16" height="16"><use href="#i-code" width="16" height="16"/></svg>
<svg class="a" style="left:730px;top:233px" width="16" height="16"><use href="#i-wizard" width="16" height="16"/></svg>
<svg class="a" style="left:795px;top:233px" width="16" height="16"><use href="#i-save" width="16" height="16"/></svg>
<svg class="a" style="left:816px;top:232px" width="16" height="16"><use href="#i-help" width="16" height="16"/></svg>

<!-- canvas svg -->
<svg class="a" style="left:0;top:0" width="1028" height="742"><path d="M156 333.5L517.8 338.3" stroke="#000" stroke-width="1" shape-rendering="crispEdges"/><path d="M529.5 338.5L515.4 343.5L517.8 338.3L515.6 333.1Z" fill="#ff0000" stroke="#000" stroke-width="1.1" stroke-linejoin="miter"/><path d="M156 337.5L496.0 464.4" stroke="#000" stroke-width="1" shape-rendering="crispEdges"/><path d="M507 468.5L492.1 468.5L496.0 464.4L495.7 458.7Z" fill="#ff0000" stroke="#000" stroke-width="1.1" stroke-linejoin="miter"/><path d="M553 338.5L709.8 335.7" stroke="#000" stroke-width="1" shape-rendering="crispEdges"/><path d="M721.5 335.5L707.6 340.9L709.8 335.7L707.4 330.6Z" fill="#00e000" stroke="#000" stroke-width="1.1" stroke-linejoin="miter"/><path d="M527 473.5L710.3 461.3" stroke="#000" stroke-width="1" shape-rendering="crispEdges"/><path d="M722 460.5L708.4 466.6L710.3 461.3L707.7 456.2Z" fill="#00e000" stroke="#000" stroke-width="1.1" stroke-linejoin="miter"/><path d="M527 477.5L592.1 503.2" stroke="#000" stroke-width="1" shape-rendering="crispEdges"/><path d="M603 507.5L588.1 507.2L592.1 503.2L591.9 497.5Z" fill="#ff0000" stroke="#000" stroke-width="1.1" stroke-linejoin="miter"/>
<!-- tree icon -->
<g transform="translate(533,330)">
<rect width="16" height="16" fill="#fff"/>
<path d="M8 1L4 8M8 1L12 8M3.5 8L1.5 14M3.5 8L5.5 14M12.5 8L10.5 14M12.5 8L14.5 14" stroke="#0000ff" stroke-width="1.3" stroke-dasharray="1.3 0.7"/>
<g fill="#000"><path d="M8 -0.5l2 1.8l-2 1.8l-2-1.8z"/><path d="M3.5 6.3l1.8 1.8l-1.8 1.8l-1.8-1.8z"/><path d="M12.5 6.3l1.8 1.8l-1.8 1.8l-1.8-1.8z"/>
<path d="M1.5 12.8l1.5 1.5l-1.5 1.5l-1.5-1.5z"/><path d="M5.5 12.8l1.5 1.5l-1.5 1.5l-1.5-1.5z"/><path d="M10.5 12.8l1.5 1.5l-1.5 1.5l-1.5-1.5z"/><path d="M14.5 12.8l1.5 1.5l-1.5 1.5l-1.5-1.5z"/></g>
</g>
<!-- boston2 sheet -->
<g transform="translate(136,326)"><use href="#i-sheet" width="16" height="16"/></g>
<!-- report icons -->
<g transform="translate(725,327)"><use href="#i-report" width="16" height="16"/></g>
<g transform="translate(725,451)"><use href="#i-report" width="16" height="16"/></g>
<!-- descript icon -->
<g transform="translate(511,464)" shape-rendering="crispEdges">
<rect width="15" height="15" fill="#fff"/>
<path d="M1.5 9.5V2.5H13.5V4" fill="none" stroke="#aca899"/>
<path d="M3 4h3M3 6h2M3 8h1" stroke="#aca899"/>
<path d="M1 13.5Q4 13 6 9Q8 4 10 4.5Q12 5.5 12.5 8" fill="none" stroke="#f00" stroke-dasharray="1 0.6" shape-rendering="auto"/>
<path d="M4 13h1M6 11v2M8 10v3M10 9v4M12 8v5M14 6v7M4 13h10" stroke="#0000ff" stroke-width="1"/>
<rect x="0" y="15" width="16" height="1" fill="#000"/>
</g>
<!-- selected sheet -->
<g transform="translate(605,505)" shape-rendering="crispEdges">
<rect x="0.5" y="0.5" width="15" height="15" fill="#a4bdec" stroke="#1a3a80"/>
<rect x="1" y="1" width="14" height="14" fill="none" stroke="#2a5ab0" stroke-width="0.5"/>
<path d="M5 3h2M8 3h2M11 3h2M2 5h2M2 7h2M2 9h2M2 11h2M2 13h2" stroke="#0020a0"/>
<path d="M5 5h2M8 5h2M11 5h2M5 7h2M8 7h2M11 7h2M5 9h2M8 9h2M11 9h2M5 11h2M8 11h2M11 11h2M5 13h2M8 13h2M11 13h2" stroke="#6080b0"/>
</g>
</svg>
<!-- node labels -->
<div class="a nl" style="left:125px;top:346px">Boston2</div>
<div class="a nl" style="left:518px;top:351px">Standar...</div>
<div class="a nl" style="left:710px;top:348px">Standar...</div>
<div class="a nl" style="left:494px;top:486px">Descript...</div>
<div class="a nl" style="left:710px;top:472px">Descript...</div>
<svg class="a" style="left:537px;top:524px" width="152" height="15"><rect width="152" height="15" fill="#316ac5"/><rect x="0.5" y="0.5" width="151" height="14" fill="none" stroke="#202020"/><rect x="0.5" y="0.5" width="151" height="14" fill="none" stroke="#e8c800" stroke-dasharray="1 1"/></svg>
<div class="a nl" style="left:540px;top:525px;color:#fff">Descriptive Statistics (Boston2)</div>

<!-- status bar -->
<div class="a tbar" style="left:0;top:708px;width:1024px;height:30px;border-top:1px solid #fff"></div>
<div class="a" style="left:387px;top:718px">Ready</div>
<div class="a" style="left:2px;top:711px;width:23px;height:25px;background:#ece9d8;border:1px solid;border-color:#fff #716f64 #716f64 #fff;box-shadow:inset -1px -1px #aca899"></div>
<svg class="a" style="left:5px;top:715px" width="16" height="16"><use href="#i-stat" width="16" height="16"/></svg>
<div class="a" style="left:382px;top:710px;width:2px;height:28px;border-left:1px solid #aca899;border-right:1px solid #fff"></div>
<div class="a sp" style="left:839px;width:74px;color:#000">Boston2.sta</div>
<div class="a sp" style="left:915px;width:38px">CAPS</div>
<div class="a sp" style="left:955px;width:35px">NUM</div>
<div class="a sp" style="left:992px;width:32px">ЗАП</div>

<!-- taskbar strip -->
<div class="a" style="left:0;top:738px;width:1024px;height:4px;background:linear-gradient(#5a9af0,#3a7ee8 2px,#2f74e0)"></div>
<div class="a" style="left:0;top:738px;width:92px;height:4px;background:linear-gradient(#8cc48c,#5aa85a 2px,#4c9c4c)"></div>
<div class="a" style="left:714px;top:738px;width:310px;height:4px;background:linear-gradient(#30a8f8,#1a94f2 2px,#1890f0);border-left:1px solid #2050a0"></div>
</body></html>
